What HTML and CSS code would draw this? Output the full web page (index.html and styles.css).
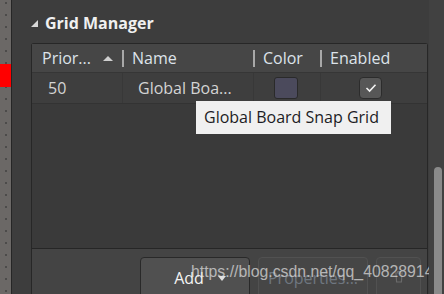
FILE: index.html
```html
<!DOCTYPE html>
<html>
<head>
<meta charset="utf-8">
<link rel="stylesheet" href="styles.css">
</head>
<body>
<div class="strip"><div class="red"></div></div>
<div class="sep"></div>
<div class="panel">
  <div class="title"><span class="tri"></span><span class="title-text">Grid Manager</span></div>
  <div class="box">
    <div class="table">
      <div class="thead">
        <div class="th c1">Prior...<span class="sort"></span></div>
        <div class="th c2">Name</div>
        <div class="th c3">Color</div>
        <div class="th c4">Enabled</div>
      </div>
      <div class="row">
        <div class="td c1 num">50</div>
        <div class="td c2 name">Global Boa...</div>
        <div class="td c3 swcell"><span class="swatch"></span></div>
        <div class="td c4 chcell"><span class="check"><svg width="12" height="10" viewBox="0 0 12 10"><path d="M1.5 5 L4.6 8 L10.5 1.8" fill="none" stroke="#f2f2f2" stroke-width="1.6"/></svg></span></div>
      </div>
      <div class="tooltip">Global Board Snap Grid</div>
    </div>
    <div class="bar">
      <div class="btn primary">Add <span class="caret"></span></div>
      <div class="btn disabled">Properties...</div>
      <div class="btn disabled small"><svg width="10" height="13" viewBox="0 0 10 13"><path d="M1 3h8M3.5 3V1.5h3V3M2 3.5l.6 8.5h4.8L8 3.5" fill="none" stroke="#6a6a6a" stroke-width="1.2"/></svg></div>
    </div>
    <div class="watermark">https://blog.csdn.net/qq_40828914</div>
  </div>
</div>
<div class="scroll"><div class="thumb"></div></div>
</body>
</html>
```

FILE: styles.css
```css
* { box-sizing: border-box; }
html, body { margin: 0; height: 294px; overflow: hidden; }
body {
  display: flex;
  background: #3d3d3d;
  font-family: "Open Sans", "Noto Sans", sans-serif;
  color: #dcdcdc;
}
.strip {
  width: 11px;
  flex: none;
  background-color: #6b6866;
  background-image: radial-gradient(circle at 6px 3px, #4c4b4a 0.8px, transparent 1px);
  background-size: 11px 12px;
  position: relative;
}
.red {
  position: absolute;
  left: 0; top: 64px;
  width: 11px; height: 23px;
  background: #ff0000;
}
.sep { width: 1px; flex: none; background: #262626; }
.panel {
  flex: 1;
  display: flex;
  flex-direction: column;
  padding-left: 19px;
  min-width: 0;
}
.title {
  flex: none;
  height: 43px;
  display: flex;
  align-items: flex-start;
  padding-top: 12px;
}
.tri {
  width: 0; height: 0;
  margin-top: 8px;
  border-left: 7px solid transparent;
  border-bottom: 7px solid #d8d8d8;
  margin-right: 7px;
}
.title-text {
  font-weight: 700;
  font-size: 16px;
  line-height: 22px;
  color: #f0f0f0;
}
.box {
  flex: 1;
  min-height: 0;
  width: 397px;
  display: flex;
  flex-direction: column;
  border-left: 1px solid #272727;
  border-right: 1px solid #272727;
  border-top: 1px solid #272727;
  border-radius: 3px 3px 0 0;
  position: relative;
}
.table {
  flex: none;
  height: 205px;
  background: #3a3a3a;
  border-bottom: 1px solid #262626;
  position: relative;
}
.thead {
  display: flex;
  height: 29px;
  background: #464646;
  border-bottom: 1px solid #363636;
}
.th {
  font-size: 16px;
  line-height: 29px;
  padding-left: 10px;
  color: #dde3ea;
  position: relative;
}
.th.c2::before, .th.c3::before, .th.c4::before {
  content: "";
  position: absolute;
  left: 0; top: 6px;
  width: 2px; height: 17px;
  background: #a8a8a8;
}
.c1 { width: 90px; }
.c2 { width: 131px; }
.c3 { width: 67px; }
.c4 { flex: 1; }
.sort {
  position: absolute;
  left: 71px; top: 12px;
  width: 0; height: 0;
  border-left: 5px solid transparent;
  border-right: 5px solid transparent;
  border-bottom: 5px solid #cfcfcf;
}
.row {
  display: flex;
  height: 31px;
  background: #3e3e3e;
  border-bottom: 1px solid #333333;
}
.td {
  font-size: 16px;
  line-height: 30px;
  color: #d4d4d4;
  border-left: 1px solid #383838;
}
.td.c1 { border-left: none; }
.num { padding-left: 16px; }
.name { padding-left: 15px; white-space: nowrap; }
.swcell { padding-left: 20px; padding-top: 4px; }
.swatch {
  display: block;
  width: 24px; height: 22px;
  background: #4b4a5c;
  border: 1px solid #2a2a2a;
  border-radius: 3px;
}
.chcell { padding-left: 38px; padding-top: 4px; }
.check {
  display: flex;
  align-items: center;
  justify-content: center;
  width: 23px; height: 22px;
  background: #575757;
  border: 1px solid #2c2c2c;
  border-radius: 4px;
}
.tooltip {
  position: absolute;
  left: 164px; top: 57px;
  width: 195px; height: 33px;
  background: #f0f0f0;
  color: #1c1c24;
  font-size: 16px;
  line-height: 32px;
  padding-left: 8px;
  white-space: nowrap;
}
.bar {
  flex: 1;
  min-height: 0;
  overflow: hidden;
  background: #444444;
  display: flex;
  justify-content: flex-end;
  gap: 8px;
  padding: 8px 6px 0 0;
}
.btn {
  flex: none;
  height: 44px;
  width: 110px;
  border-radius: 4px;
  font-size: 16px;
  line-height: 28px;
  padding-top: 6px;
  text-align: center;
}
.primary {
  background: #505050;
  border: 1px solid #292929;
  color: #f4f4f4;
  padding-right: 12px;
  position: relative;
}
.caret {
  position: absolute;
  left: 77px; top: 18px;
  border-left: 4px solid transparent;
  border-right: 4px solid transparent;
  border-top: 5px solid #e0e0e0;
}
.disabled {
  background: #464646;
  border: 1px solid #515151;
  color: #6f7780;
}
.small {
  width: 45px;
  padding-top: 12px;
  line-height: 0;
}
.watermark {
  position: absolute;
  left: 159px; top: 219px;
  font-family: "Liberation Sans", Arial, sans-serif;
  font-size: 15.8px;
  color: rgba(225, 225, 225, 0.72);
  white-space: nowrap;
}
.scroll {
  width: 15px;
  flex: none;
  margin-left: 1px;
  background: #414141;
  position: relative;
}
.thumb {
  position: absolute;
  left: 5px; top: 167px;
  width: 8px; height: 140px;
  background: #8a8a8a;
  border-radius: 4px;
}
```
